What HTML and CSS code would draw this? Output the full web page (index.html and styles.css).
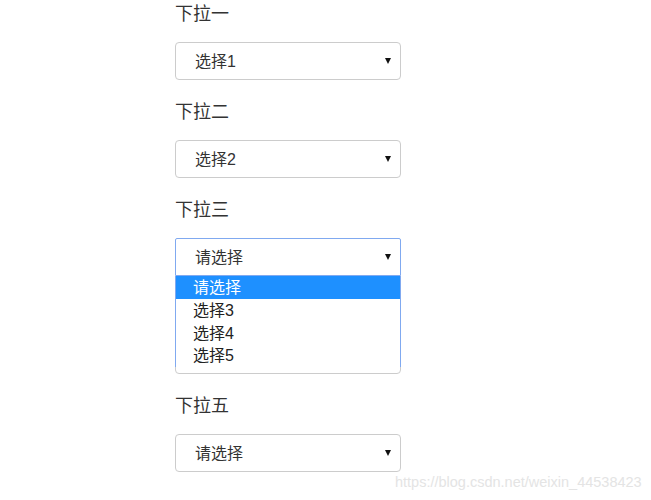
FILE: index.html
```html
<!DOCTYPE html>
<html lang="zh-CN">

<head>
    <meta charset="UTF-8">
    <title>下拉框</title>
    <link rel="stylesheet" href="styles.css">
</head>

<body>
    <div class="page">
        <!-- 下拉一 -->
        <div class="group">
            <div class="title">下拉一</div>
            <div class="select-wrap">
                <select class="select">
                    <option>选择1</option>
                </select>
                <span class="arrow"></span>
            </div>
        </div>

        <!-- 下拉二 -->
        <div class="group">
            <div class="title">下拉二</div>
            <div class="select-wrap">
                <select class="select">
                    <option>选择2</option>
                </select>
                <span class="arrow"></span>
            </div>
        </div>

        <!-- 下拉三 (展开) -->
        <div class="group">
            <div class="title">下拉三</div>
            <div class="select-wrap">
                <select class="select focus">
                    <option>请选择</option>
                    <option>选择3</option>
                    <option>选择4</option>
                    <option>选择5</option>
                </select>
                <span class="arrow"></span>
                <ul class="dropdown">
                    <li class="selected">请选择</li>
                    <li>选择3</li>
                    <li>选择4</li>
                    <li>选择5</li>
                </ul>
            </div>
        </div>

        <!-- 下拉四 (被列表遮住) -->
        <div class="group covered">
            <div class="title">下拉四</div>
            <div class="select-wrap">
                <select class="select">
                    <option></option>
                </select>
            </div>
        </div>

        <!-- 下拉五 -->
        <div class="group">
            <div class="title">下拉五</div>
            <div class="select-wrap">
                <select class="select">
                    <option>请选择</option>
                </select>
                <span class="arrow"></span>
            </div>
        </div>
    </div>

    <div class="watermark">https://blog.csdn.net/weixin_44538423</div>
</body>

</html>
```

FILE: styles.css
```css
body {
    margin: 0;
    font-family: "Liberation Sans", "Noto Sans CJK SC", sans-serif;
    color: #333;
    background: #fff;
}

.page {
    padding: 1px 0 0 175px;
}

.group {
    margin-bottom: 19px;
}

.title {
    height: 24px;
    line-height: 26px;
    font-size: 18px;
    margin-bottom: 17px;
}

/* 被展开列表挡住的标题 */
.covered .title {
    visibility: hidden;
}

.select-wrap {
    position: relative;
    width: 226px;
}

.select {
    display: block;
    width: 226px;
    height: 38px;
    margin: 0;
    padding: 0 30px 0 19px;
    border: 1px solid #ccc;
    border-radius: 4px;
    background: #fff;
    font-family: "Liberation Sans", "Noto Sans CJK SC", sans-serif;
    font-size: 16px;
    color: #333;
    appearance: none;
    -webkit-appearance: none;
    box-sizing: border-box;
    outline: none;
}

.select.focus {
    border-color: #80a9f0;
    border-radius: 2px 2px 0 0;
}

/* 小三角 */
.arrow {
    position: absolute;
    right: 10px;
    top: 16px;
    width: 0;
    height: 0;
    border-left: 3.5px solid transparent;
    border-right: 3.5px solid transparent;
    border-top: 6px solid #111;
    pointer-events: none;
}

/* 展开的下拉列表 */
.dropdown {
    position: absolute;
    top: 38px;
    left: 0;
    width: 226px;
    margin: 0;
    padding: 0;
    list-style: none;
    background: #fff;
    border-left: 1px solid #80a9f0;
    border-right: 1px solid #80a9f0;
    box-sizing: border-box;
    z-index: 2;
}

.dropdown li {
    height: 22.75px;
    line-height: 23px;
    padding-left: 17px;
    font-size: 16px;
    color: #222;
}

.dropdown li.selected {
    background: #1e90ff;
    color: #fff;
}

.watermark {
    position: absolute;
    left: 395px;
    top: 474px;
    font-family: "Liberation Sans", sans-serif;
    font-size: 14.5px;
    color: #e4e4e4;
    white-space: nowrap;
}
```
